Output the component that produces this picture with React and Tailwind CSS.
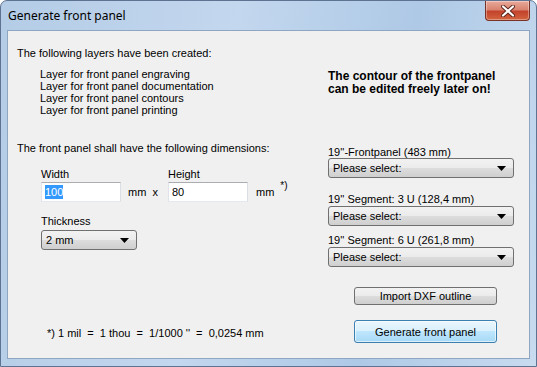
import React from "react";

const ui = { fontFamily: '"Liberation Sans", Arial, sans-serif' };

function Caret() {
  return (
    <svg width="9" height="5" viewBox="0 0 9 5" className="shrink-0">
      <path d="M0 0h9L4.5 5z" fill="#000" />
    </svg>
  );
}

function Select({ label, className = "" }) {
  return (
    <div
      className={`flex items-center justify-between rounded-[3px] border border-[#707070] bg-[linear-gradient(#f2f2f2_0%,#ebebeb_50%,#dddddd_50%,#cfcfcf_100%)] pl-[4px] pr-[7px] ${className}`}
    >
      <span className="text-[11px] leading-[12px] text-black">{label}</span>
      <Caret />
    </div>
  );
}

function Field({ children, className = "" }) {
  return (
    <div
      className={`flex items-center border border-[#abadb3] border-l-[#e2e3ea] border-r-[#dbdfe6] border-b-[#e3e9ef] bg-white px-[3px] ${className}`}
    >
      {children}
    </div>
  );
}

export default function App() {
  return (
    <div className="min-h-screen bg-white" style={ui}>
      <div className="flex h-[367px] w-[537px] flex-col rounded-t-[7px] border border-[#5d7391] bg-[linear-gradient(100deg,#b4cce6_0%,#c3d7ee_40%,#aec9e6_70%,#c8dbef_100%)]">
        {/* Title bar */}
        <div className="flex h-[29px] items-start justify-between">
          <span
            className="pl-[7px] pt-[7px] text-[12px] leading-[16px] text-black"
            style={{ fontFamily: '"Noto Sans", "Open Sans", sans-serif' }}
          >
            Generate front panel
          </span>
          <div className="mr-[6px] flex h-[20px] w-[45px] items-center justify-center rounded-b-[4px] border border-t-0 border-[#7a3126] bg-[linear-gradient(#e9a99b_0%,#d88470_45%,#c4432c_55%,#d2643f_100%)] shadow-[inset_0_0_0_1px_rgba(255,255,255,0.35)]">
            <svg width="14" height="12" viewBox="0 0 14 12">
              <path
                d="M2 1.5L12 10.5M12 1.5L2 10.5"
                stroke="#5a2218"
                strokeWidth="4"
                strokeLinecap="round"
              />
              <path
                d="M2 1.5L12 10.5M12 1.5L2 10.5"
                stroke="#fff"
                strokeWidth="2.2"
                strokeLinecap="round"
              />
            </svg>
          </div>
        </div>

        {/* Client area */}
        <div className="mx-[6px] mb-[7px] flex flex-1 border border-[#8ea6c2] bg-[#f0f0f0] text-[11px] leading-[12px] text-black">
          {/* Left column */}
          <div className="flex w-[318px] flex-col pl-[9px]">
            <p className="mt-[16px]">The following layers have been created:</p>
            <div className="ml-[23px] mt-[9px] flex flex-col">
              <span>Layer for front panel engraving</span>
              <span>Layer for front panel documentation</span>
              <span>Layer for front panel contours</span>
              <span>Layer for front panel printing</span>
            </div>
            <p className="mt-[26px]">The front panel shall have the following dimensions:</p>

            <div className="ml-[24px] mt-[14px] flex items-end">
              <div className="flex flex-col">
                <span className="mb-[2px]">Width</span>
                <Field className="h-[20px] w-[80px]">
                  <span className="bg-[#3399ff] leading-[14px] text-white">100</span>
                </Field>
              </div>
              <span className="mb-[4px] ml-[7px] w-[40px]">mm&nbsp;&nbsp;x</span>
              <div className="flex flex-col">
                <span className="mb-[2px]">Height</span>
                <Field className="h-[20px] w-[80px]">
                  <span>80</span>
                </Field>
              </div>
              <span className="mb-[4px] ml-[8px]">mm</span>
              <span className="mb-[10px] ml-[6px] text-[10px]">*)</span>
            </div>

            <div className="ml-[24px] mt-[13px] flex flex-col">
              <span className="mb-[3px]">Thickness</span>
              <Select label="2 mm" className="h-[20px] w-[96px]" />
            </div>

            <p className="ml-[30px] mt-[77px]">
              *)&nbsp;1 mil&nbsp; = &nbsp;1 thou&nbsp; = &nbsp;1/1000 ''&nbsp; = &nbsp;0,0254 mm
            </p>
          </div>

          {/* Right column */}
          <div className="flex flex-1 flex-col pl-[2px]">
            <p className="mt-[39px] text-[12px] font-bold leading-[13px]">
              The contour of the frontpanel
              <br />
              can be edited freely later on!
            </p>

            <span className="mt-[50px]">19''-Frontpanel (483 mm)</span>
            <Select label="Please select:" className="mt-[0px] h-[20px] w-[186px]" />

            <span className="mt-[15px]">19'' Segment: 3 U (128,4 mm)</span>
            <Select label="Please select:" className="mt-[1px] h-[20px] w-[186px]" />

            <span className="mt-[8px]">19'' Segment: 6 U (261,8 mm)</span>
            <Select label="Please select:" className="mt-[1px] h-[20px] w-[186px]" />

            <button className="ml-[26px] mt-[20px] h-[18px] w-[143px] rounded-[3px] border border-[#707070] bg-[linear-gradient(#f2f2f2_0%,#ebebeb_50%,#dddddd_50%,#cfcfcf_100%)] text-[11px] leading-[12px]">
              Import DXF outline
            </button>
            <button className="ml-[26px] mt-[15px] h-[23px] w-[143px] rounded-[3px] border border-[#3c7fb1] bg-[linear-gradient(#eaf6fd_0%,#d9f0fc_50%,#bee6fd_50%,#a7d9f5_100%)] text-[11px] leading-[12px] shadow-[inset_0_0_0_1px_rgba(255,255,255,0.6)]">
              Generate front panel
            </button>
          </div>
        </div>
      </div>
    </div>
  );
}
